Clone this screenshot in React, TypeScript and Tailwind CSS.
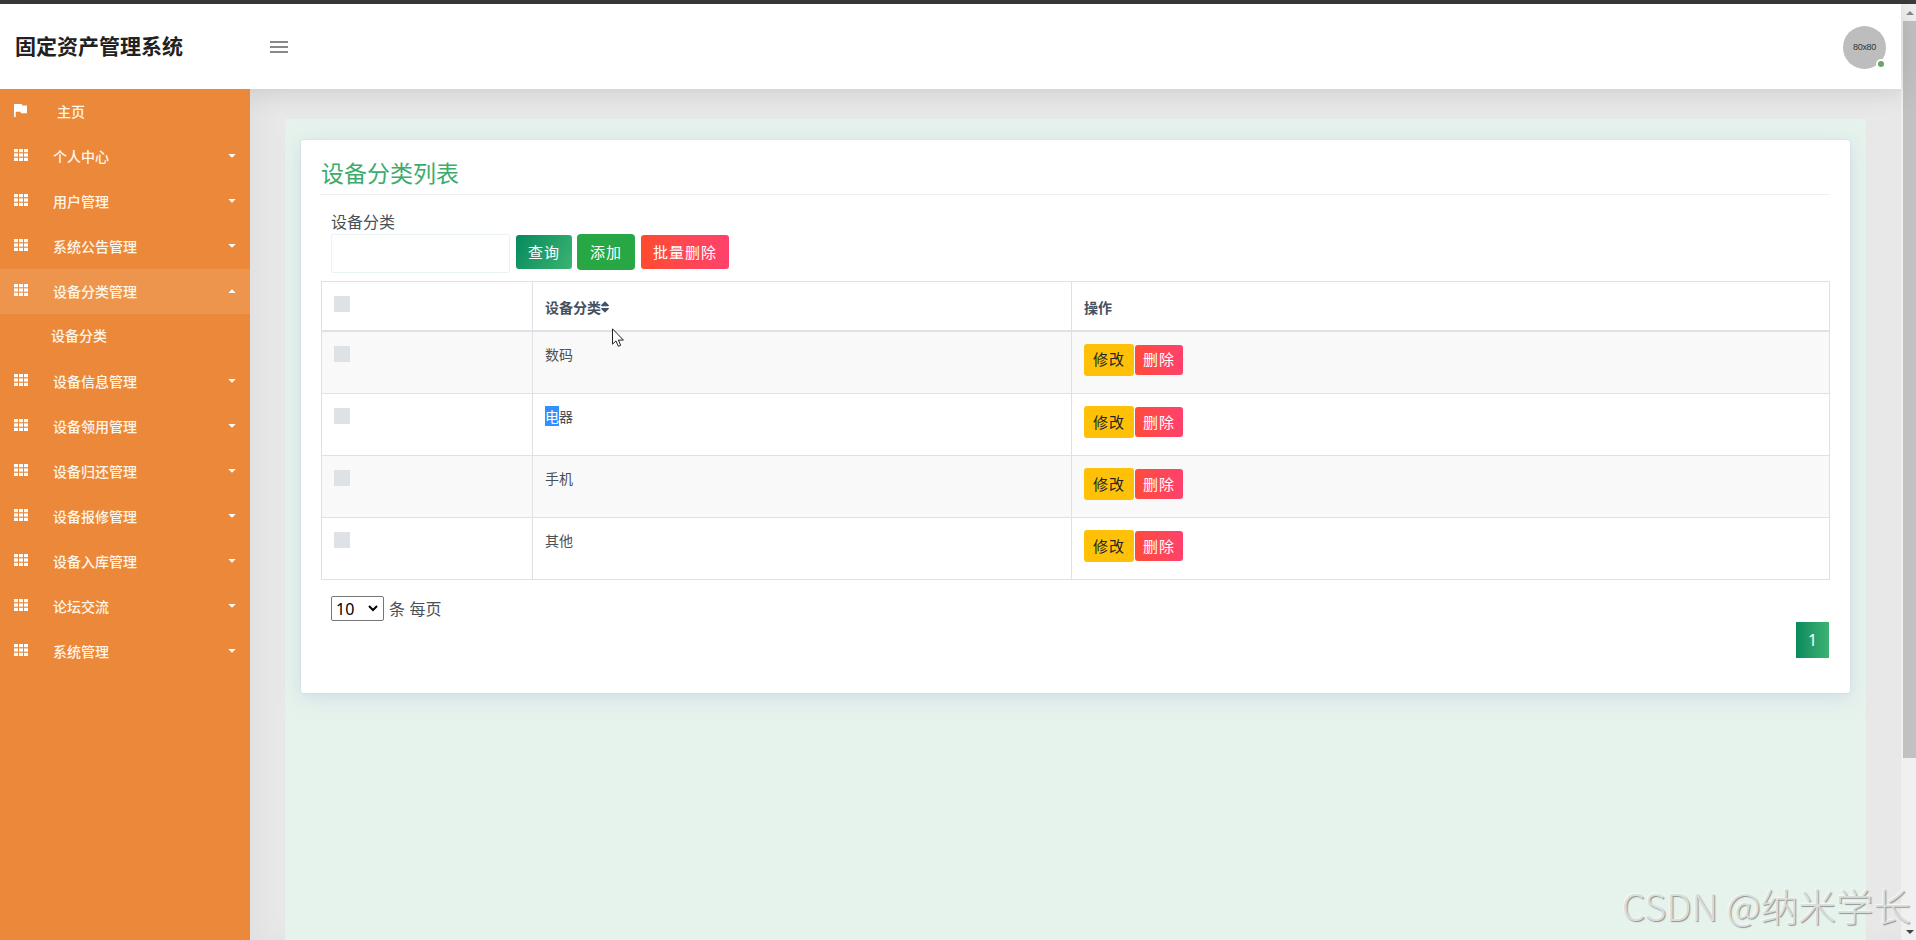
import { useState } from "react";
import { FaSort } from "react-icons/fa";

interface MenuEntry {
  label: string;
  children?: string[];
}

const MENU: MenuEntry[] = [
  { label: "个人中心" },
  { label: "用户管理" },
  { label: "系统公告管理" },
  { label: "设备分类管理", children: ["设备分类"] },
  { label: "设备信息管理" },
  { label: "设备领用管理" },
  { label: "设备归还管理" },
  { label: "设备报修管理" },
  { label: "设备入库管理" },
  { label: "论坛交流" },
  { label: "系统管理" },
];

const ROWS = ["数码", "电器", "手机", "其他"];

function GridIcon() {
  return (
    <svg width="14" height="12" viewBox="0 0 14 12" fill="#fff" className="mb-[3px]">
      {[0, 4.4, 8.8].map((y) =>
        [0, 5, 10].map((x) => <rect key={`${x}-${y}`} x={x} y={y} width="4" height="3.2" />)
      )}
    </svg>
  );
}

function Header() {
  return (
    <header className="relative z-10 flex h-[85px] shrink-0 items-center bg-white shadow-[0_0_30px_rgba(0,0,0,0.12)]">
      <h1 className="w-[252px] pb-[2px] pl-[15px] text-[21px] leading-none font-bold text-[#212121]">固定资产管理系统</h1>
      <button className="ml-[18px] text-[#888]" title="菜单">
        <svg width="18" height="12" viewBox="0 0 18 12" fill="currentColor" className="mt-px">
          <path d="M0 0h18v2H0zM0 5h18v2H0zM0 10h18v2H0z" />
        </svg>
      </button>
      <div className="relative mt-px mr-[15px] ml-auto flex size-[43px] items-center justify-center rounded-full bg-[#bdbdbd]">
        <span className="pt-px font-['Liberation_Sans'] text-[9px] tracking-[-0.3px] text-[#333]">80x80</span>
        <span className="absolute right-0 bottom-0 size-[10px] rounded-full border-2 border-white bg-[#6aa564]" />
      </div>
    </header>
  );
}

function Sidebar() {
  const [open, setOpen] = useState("设备分类管理");

  return (
    <nav className="relative z-20 w-[250px] shrink-0 bg-[#ec8839] text-[14px] font-medium text-[#fff6ea]">
      <a className="flex h-[45px] items-center pl-[14px]">
        <svg width="13" height="13" viewBox="5 4 15 17" preserveAspectRatio="none" fill="#fff" className="mb-[3px]">
          <path d="M14.4 6L14 4H5v17h2v-7h5.6l.4 2h7V6z" />
        </svg>
        <span className="pb-px pl-[30px]">主页</span>
      </a>
      {MENU.map((item) => {
        const isOpen = open === item.label;
        return (
          <div key={item.label}>
            <button
              onClick={() => setOpen(isOpen ? "" : item.label)}
              className={`flex h-[45px] w-full items-center pr-[14px] pl-[14px] ${isOpen ? "bg-[#ee954d]" : ""}`}
            >
              <GridIcon />
              <span className="pb-px pl-[25px]">{item.label}</span>
              <svg width="8" height="4" viewBox="0 0 8 4" fill="#fff" className={`mb-px ml-auto ${isOpen ? "rotate-180" : ""}`}>
                <path d="M0.3 0h7.4L4 3.8z" />
              </svg>
            </button>
            {isOpen &&
              item.children?.map((child) => (
                <a key={child} className="flex h-[45px] items-center pb-[3px] pl-[51px]">
                  {child}
                </a>
              ))}
          </div>
        );
      })}
    </nav>
  );
}

function Checkbox() {
  return <div className="size-4 bg-[#dee2e6]" />;
}

function CategoryTable() {
  return (
    <table className="w-[1509px] table-fixed border-collapse border border-[#dee2e6] text-[14px] leading-[21px]">
      <colgroup>
        <col className="w-[211px]" />
        <col className="w-[539px]" />
        <col />
      </colgroup>
      <thead>
        <tr className="h-[49px] text-left text-[#455060]">
          <th className="border border-b-2 border-[#dee2e6] pb-[4px] pl-3 align-middle">
            <Checkbox />
          </th>
          <th className="border border-b-2 border-[#dee2e6] pt-[3px] pl-3 align-middle font-bold">
            <div className="flex items-center">
              设备分类
              <FaSort size={14} className="-ml-[3px]" />
            </div>
          </th>
          <th className="border border-b-2 border-[#dee2e6] pt-[3px] pl-3 align-middle font-bold">操作</th>
        </tr>
      </thead>
      <tbody>
        {ROWS.map((name) => (
          <tr key={name} className="h-[62px] align-top text-[#495057] first:h-[63px] odd:bg-[#f9f9f9]">
            <td className="border border-[#dee2e6] pt-[14px] pl-3">
              <Checkbox />
            </td>
            <td className="border border-[#dee2e6] pt-3 pl-3">
              {name === "电器" ? (
                <>
                  <span className="bg-[#3390ff] text-white">电</span>器
                </>
              ) : (
                name
              )}
            </td>
            <td className="border border-[#dee2e6] pt-3 pl-3">
              <div className="flex items-center gap-px text-[15px] tracking-[1px]">
                <button className="h-8 w-[50px] rounded-[3px] bg-[#ffc107] pb-[2px] text-[#212529]">修改</button>
                <button className="h-[30px] w-12 rounded-[3px] bg-linear-to-r from-[#ff4b37] to-[#ff416c] pb-[2px] text-white">删除</button>
              </div>
            </td>
          </tr>
        ))}
      </tbody>
    </table>
  );
}

function Card() {
  return (
    <section className="h-[553px] rounded-[3px] bg-white pr-[20px] pl-[19px] shadow-[0_4px_20px_rgba(190,200,225,0.55),0_0_2px_rgba(180,195,220,0.6)]">
      <h2 className="flex h-[55px] items-center border-b border-[#edeff1] pt-[11px] pl-px text-[23px] text-[#3cab6c]">设备分类列表</h2>
      <div className="pt-[14px] pl-[11px]">
        <label className="block h-[25px] text-[16px] leading-[24px] text-[#495057]">设备分类</label>
        <div className="flex h-[39px] items-center text-[15px] tracking-[1px] text-white">
          <input className="h-[39px] w-[179px] rounded-[2px] border border-[#e9f3f1] px-3 text-[#495057] outline-none" />
          <button className="mb-[3px] ml-[6px] h-[34px] w-14 rounded-[3px] bg-linear-[120deg] from-[#058a5e] to-[#3cb371]">查询</button>
          <button className="mb-[3px] ml-[5px] h-9 w-[58px] rounded-[4px] bg-[#28a745]">添加</button>
          <button className="mb-[3px] ml-[6px] h-[34px] w-[88px] rounded-[3px] bg-linear-to-r from-[#ff4b2b] to-[#ff416c]">批量删除</button>
        </div>
      </div>
      <div className="mt-[8px] ml-px">
        <CategoryTable />
      </div>
      <div className="mt-[16px] flex items-center pl-[11px] text-[16px] text-[#495057]">
        <div className="flex h-[25px] w-[53px] items-center justify-between rounded-[2px] border border-[#767676] bg-white pr-[5px] pl-[4px] font-['Noto_Sans'] text-black">
          10
          <svg width="10" height="7" viewBox="0 0 10 7" fill="none" stroke="currentColor" strokeWidth="2">
            <path d="M1 1l4 4 4-4" />
          </svg>
        </div>
        <span className="ml-[5px] pb-[2px] leading-none [word-spacing:1px]">条 每页</span>
      </div>
      <div className="mt-px flex justify-end pr-px">
        <button className="h-9 w-[33px] bg-linear-to-r from-[#058a5e] to-[#3cb371] font-['Noto_Sans'] text-[16px] text-white">1</button>
      </div>
    </section>
  );
}

function Scrollbar() {
  return (
    <div className="flex w-[15px] shrink-0 flex-col items-center bg-[#f0f0f0] pl-[2px]">
      <div className="flex h-[17px] items-center">
        <svg width="8" height="4" viewBox="0 0 8 4" fill="#8a8a8a">
          <path d="M0 4h8L4 0z" />
        </svg>
      </div>
      <div className="h-[737px] w-[13px] bg-[#c1c1c1]" />
      <div className="mt-auto flex h-[17px] items-center">
        <svg width="8" height="4" viewBox="0 0 8 4" fill="#444">
          <path d="M0 0h8L4 4z" />
        </svg>
      </div>
    </div>
  );
}

export default function App() {
  return (
    <div className="relative flex h-[940px] w-[1916px] flex-col overflow-hidden bg-[#e8e8e8] font-['Noto_Sans_CJK_SC',sans-serif]">
      <div className="h-1 shrink-0 bg-[#3a3a3a]" />
      <div className="flex min-h-0 flex-1">
        <div className="flex min-w-0 flex-1 flex-col">
          <Header />
          <div className="flex min-h-0 flex-1">
            <Sidebar />
            <main className="flex-1 pt-[30px] pr-[35px] pl-[35px] shadow-[inset_12px_0_24px_rgba(0,0,0,0.03)]">
              <div className="mr-px h-full bg-[#e6f3ec] pt-[21px] pr-[16px] pl-[16px]">
                <Card />
              </div>
            </main>
          </div>
        </div>
        <Scrollbar />
      </div>

      {/* mouse pointer */}
      <svg className="absolute top-[328px] left-[612px]" width="13" height="20" viewBox="0 0 13 20" fill="#fff" stroke="#222" strokeWidth="1">
        <path d="M.5.8v15.4l3.5-3.3 2.3 5.4 2.4-1-2.3-5.2h5z" />
      </svg>

      <div className="absolute right-[5px] bottom-[7px] text-[37.6px] leading-[56px] font-light whitespace-nowrap text-[#d9dddb] [text-shadow:1px_1px_1px_#8f9492,-1px_-1px_1px_#f4f8f6]">
        CSDN @纳米学长
      </div>
    </div>
  );
}
